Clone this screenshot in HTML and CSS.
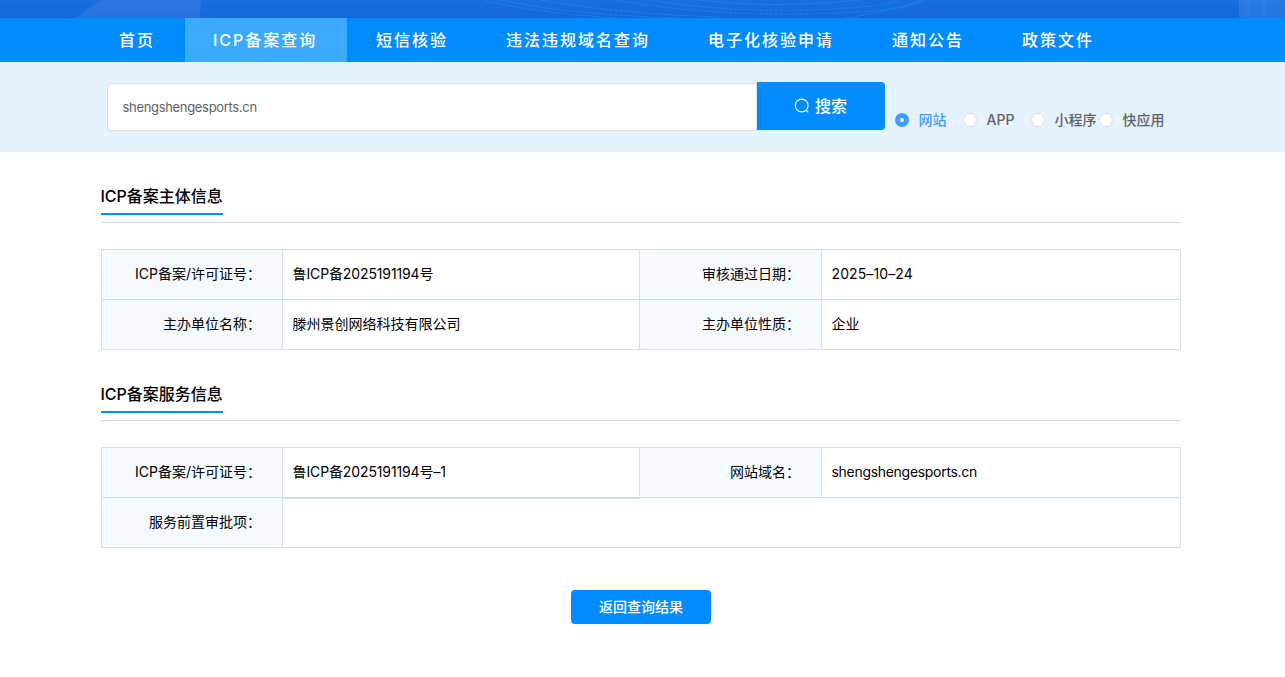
FILE: index.html
```html
<!DOCTYPE html>
<html lang="zh-CN">
<head>
<meta charset="utf-8">
<title>ICP备案查询</title>
<link rel="stylesheet" href="styles.css">
</head>
<body>
<header class="banner">
  <svg class="banner-art" viewBox="0 0 1285 18" width="1285" height="18" aria-hidden="true">
    <path class="banner-disc" d="M76 18Q88 8 102 0H201Q201 9 199 18Z"/>
    <g class="banner-waves">
      <path d="M484 0Q540 14 620 18"/>
      <path d="M500 0Q570 15 680 18"/>
      <path d="M540 0Q620 14 720 17"/>
      <path d="M615 0Q700 15 800 14T925 0"/>
      <path d="M650 0Q730 13 810 10T900 0"/>
      <path d="M700 0Q770 9 860 0"/>
      <path d="M845 18Q885 13 922 0"/>
    </g>
    <path class="banner-tower" d="M1239 0H1285V18H1239Z"/>
    <path class="banner-tower-detail" d="M1244 0H1250V18H1244ZM1262 0H1266V18H1262Z"/>
  </svg>
</header>
<nav class="nav">
  <a class="nav-item nav-home">首页</a>
  <a class="nav-item nav-active">ICP备案查询</a>
  <a class="nav-item">短信核验</a>
  <a class="nav-item">违法违规域名查询</a>
  <a class="nav-item">电子化核验申请</a>
  <a class="nav-item">通知公告</a>
  <a class="nav-item">政策文件</a>
</nav>
<section class="search">
  <div class="search-input">shengshengesports.cn</div>
  <button class="search-button">
    <svg width="16" height="16" viewBox="0 0 16 16" aria-hidden="true"><circle cx="7.7" cy="7.5" r="6.4"/><path d="M12.3 12.3L14.3 14.3"/></svg>
    <span>搜索</span>
  </button>
  <div class="radios">
    <label class="radio radio-on"><i class="dot"></i>网站</label>
    <label class="radio"><i class="dot"></i>APP</label>
    <label class="radio"><i class="dot"></i>小程序</label>
    <label class="radio"><i class="dot"></i>快应用</label>
  </div>
</section>
<main class="content">
  <section class="block">
    <div class="block-head"><h2 class="block-title">ICP备案主体信息</h2></div>
    <div class="grid">
      <div class="cell label">ICP备案/许可证号<span class="colon">：</span></div>
      <div class="cell licence">鲁ICP备2025191194号</div>
      <div class="cell label">审核通过日期<span class="colon">：</span></div>
      <div class="cell date">2025–10–24</div>
      <div class="cell label">主办单位名称<span class="colon">：</span></div>
      <div class="cell">滕州景创网络科技有限公司</div>
      <div class="cell label">主办单位性质<span class="colon">：</span></div>
      <div class="cell">企业</div>
    </div>
  </section>
  <section class="block">
    <div class="block-head"><h2 class="block-title">ICP备案服务信息</h2></div>
    <div class="grid">
      <div class="cell label">ICP备案/许可证号<span class="colon">：</span></div>
      <div class="cell licence cell-thick">鲁ICP备2025191194号–1</div>
      <div class="cell label">网站域名<span class="colon">：</span></div>
      <div class="cell domain">shengshengesports.cn</div>
      <div class="cell label">服务前置审批项<span class="colon">：</span></div>
      <div class="cell cell-wide"></div>
    </div>
  </section>
  <button class="back">返回查询结果</button>
</main>
</body>
</html>
```
FILE: styles.css
```css
* { box-sizing: border-box; }
body {
  margin: 0;
  background: #fff;
  color: #000;
  font: 14px/20px Inter, "Noto Sans CJK SC", sans-serif;
}
button { border: 0; font: inherit; color: #fff; background: #008cff; padding: 0; }
.banner { height: 18px; overflow: hidden; background: linear-gradient(#196ede, #1268d9); }
.banner-art { display: block; }
.banner-disc { fill: #fff; fill-opacity: .08; }
.banner-waves { fill: none; stroke: #1e86e8; stroke-width: .8; stroke-dasharray: 4 1; }
.banner-tower { fill: #6eaaf5; fill-opacity: .2; }
.banner-tower-detail { fill: #6eaaf5; fill-opacity: .08; }
.nav { display: flex; height: 44px; padding-left: 90px; background: #008cff; }
.nav-item {
  padding: 0 29px;
  line-height: 44px;
  font-size: 16px;
  font-weight: 500;
  letter-spacing: 2px;
  color: #fff;
  white-space: nowrap;
}
.nav-home { width: 95px; }
.nav-active { width: 162px; padding: 0 28px; background: #3caaff; }
.search { display: flex; height: 90px; padding: 20px 0 0 107px; background: #e5f2ff; }
.search-input {
  width: 650px;
  height: 48px;
  margin-top: 1px;
  padding-left: 14.5px;
  border: 1px solid #dcdfe6;
  border-radius: 4px 0 0 4px;
  background: #fff;
  color: #606266;
  font-size: 13px;
  line-height: 47px;
  letter-spacing: -.32px;
}
.search-button {
  display: flex;
  align-items: center;
  justify-content: center;
  gap: 5px;
  width: 128px;
  height: 48px;
  padding-right: 1px;
  border-radius: 0 4px 4px 0;
  font-size: 16px;
  font-weight: 500;
}
.search-button svg { fill: none; stroke: #fff; stroke-width: 1.1; }
.radios { display: flex; padding: 28px 0 0 10px; }
.radio { display: flex; align-items: center; width: 68px; height: 20px; gap: 9.5px; color: #606266; font-weight: 500; white-space: nowrap; }
.dot { flex: none; width: 14px; height: 14px; border: 1px solid #dcdfe6; border-radius: 50%; background: #fff; }
.radio-on { color: #409eff; }
.radio-on .dot { border: 5px solid #409eff; }
.content { display: flex; flex-direction: column; width: 1080px; margin-left: 101px; padding-top: 27px; }
.block { height: 198px; }
.block-head { height: 44px; margin-bottom: 26px; border-bottom: 1px solid #c8dff0; }
.block-title { width: 122px; height: 36px; margin: 0; border-bottom: 2px solid #008cff; font-size: 16px; line-height: 35px; font-weight: 500; text-indent: -.6px; white-space: nowrap; }
.grid { display: grid; grid-template-columns: 181px 357px 182px 359px; grid-auto-rows: 50px; width: 1080px; border: solid #dcdfe1; border-width: 1px 0 0 1px; }
.cell { padding-left: 9.5px; border-right: 1px solid #dcdfe1; border-bottom: 1px solid #dcdfe1; line-height: 48px; }
.cell:nth-child(-n+4) { border-bottom-color: #c8dff0; }
.label { padding: 0 21px 0 0; background: #f5faff; text-align: right; }
.colon { display: inline-block; width: 14px; text-indent: -2.5px; }
.licence { letter-spacing: -.12px; }
.date { letter-spacing: .1px; }
.domain { letter-spacing: -.3px; }
.cell-thick { height: 51px; border-bottom-width: 2px; z-index: 1; }
.cell-wide { grid-column: span 3; }
.back { align-self: center; width: 140px; height: 34px; margin-top: 15px; border-radius: 4px; font-weight: 500; }
```
